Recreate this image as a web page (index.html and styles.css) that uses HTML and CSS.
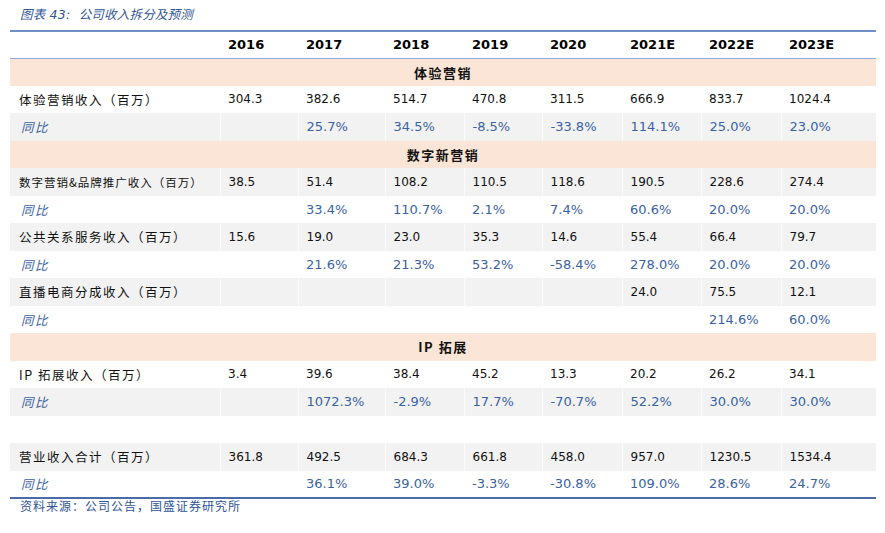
FILE: index.html
```html
<!DOCTYPE html>
<html lang="zh">
<head>
<meta charset="utf-8">
<title>公司收入拆分及预测</title>
<link rel="stylesheet" href="styles.css">
</head>
<body>
<div class="page">
  <div class="title">图表 43:&nbsp; 公司收入拆分及预测</div>
  <table class="tbl">
    <colgroup>
      <col class="c-label"><col class="c78"><col class="c87"><col class="c79"><col class="c78"><col class="c80"><col class="c79"><col class="c80"><col class="c95">
    </colgroup>
    <thead>
      <tr class="head">
        <th></th><th>2016</th><th>2017</th><th>2018</th><th>2019</th><th>2020</th><th>2021E</th><th>2022E</th><th>2023E</th>
      </tr>
    </thead>
    <tbody>
      <tr class="sec"><td colspan="9">体验营销</td></tr>
      <tr class="val"><td class="lbl">体验营销收入（百万）</td><td>304.3</td><td>382.6</td><td>514.7</td><td>470.8</td><td>311.5</td><td>666.9</td><td>833.7</td><td>1024.4</td></tr>
      <tr class="yoy gray"><td class="lbl">同比</td><td></td><td>25.7%</td><td>34.5%</td><td>-8.5%</td><td>-33.8%</td><td>114.1%</td><td>25.0%</td><td>23.0%</td></tr>
      <tr class="sec"><td colspan="9">数字新营销</td></tr>
      <tr class="val gray"><td class="lbl small">数字营销&amp;品牌推广收入（百万）</td><td>38.5</td><td>51.4</td><td>108.2</td><td>110.5</td><td>118.6</td><td>190.5</td><td>228.6</td><td>274.4</td></tr>
      <tr class="yoy"><td class="lbl">同比</td><td></td><td>33.4%</td><td>110.7%</td><td>2.1%</td><td>7.4%</td><td>60.6%</td><td>20.0%</td><td>20.0%</td></tr>
      <tr class="val gray"><td class="lbl">公共关系服务收入（百万）</td><td>15.6</td><td>19.0</td><td>23.0</td><td>35.3</td><td>14.6</td><td>55.4</td><td>66.4</td><td>79.7</td></tr>
      <tr class="yoy"><td class="lbl">同比</td><td></td><td>21.6%</td><td>21.3%</td><td>53.2%</td><td>-58.4%</td><td>278.0%</td><td>20.0%</td><td>20.0%</td></tr>
      <tr class="val gray"><td class="lbl">直播电商分成收入（百万）</td><td></td><td></td><td></td><td></td><td></td><td>24.0</td><td>75.5</td><td>12.1</td></tr>
      <tr class="yoy"><td class="lbl">同比</td><td></td><td></td><td></td><td></td><td></td><td></td><td>214.6%</td><td>60.0%</td></tr>
      <tr class="sec"><td colspan="9">IP 拓展</td></tr>
      <tr class="val"><td class="lbl">IP 拓展收入（百万）</td><td>3.4</td><td>39.6</td><td>38.4</td><td>45.2</td><td>13.3</td><td>20.2</td><td>26.2</td><td>34.1</td></tr>
      <tr class="yoy gray"><td class="lbl">同比</td><td></td><td>1072.3%</td><td>-2.9%</td><td>17.7%</td><td>-70.7%</td><td>52.2%</td><td>30.0%</td><td>30.0%</td></tr>
      <tr class="val"><td class="lbl"></td><td></td><td></td><td></td><td></td><td></td><td></td><td></td><td></td></tr>
      <tr class="val gray"><td class="lbl">营业收入合计（百万）</td><td>361.8</td><td>492.5</td><td>684.3</td><td>661.8</td><td>458.0</td><td>957.0</td><td>1230.5</td><td>1534.4</td></tr>
      <tr class="yoy last"><td class="lbl">同比</td><td></td><td>36.1%</td><td>39.0%</td><td>-3.3%</td><td>-30.8%</td><td>109.0%</td><td>28.6%</td><td>24.7%</td></tr>
    </tbody>
  </table>
  <div class="source">资料来源：公司公告，国盛证券研究所</div>
</div>
</body>
</html>
```

FILE: styles.css
```css
html, body {
  margin: 0;
  padding: 0;
  background: #ffffff;
}

.page {
  padding: 0 9px 0 10px;
  font-family: "DejaVu Sans", "Noto Sans CJK SC", sans-serif;
}

.title {
  height: 30px;
  padding-left: 10px;
  line-height: 30px;
  box-sizing: border-box;
  font-family: "DejaVu Sans", "Noto Sans CJK SC", sans-serif;
  font-size: 12.5px;
  font-style: italic;
  color: #2f5597;
  letter-spacing: 0.2px;
}

.tbl {
  width: 866px;
  border-collapse: collapse;
  table-layout: fixed;
  border-top: 2px solid #6f8fc8;
}

.c-label { width: 210px; }
.c78 { width: 78px; }
.c87 { width: 87px; }
.c79 { width: 79px; }
.c80 { width: 80px; }
.c95 { width: 95px; }

.tbl th,
.tbl td {
  height: 27.5px;
  padding: 0 0 0 8px;
  box-sizing: border-box;
  text-align: left;
  white-space: nowrap;
  font-size: 12px;
  color: #111111;
}

.head th {
  font-weight: bold;
  font-size: 13px;
  border-bottom: 1.5px solid #8eaadb;
  color: #000000;
  height: 27px;
}

.sec td {
  background: #fbe5d6;
  text-align: center;
  padding: 0;
  font-family: "Noto Sans CJK SC", sans-serif;
  font-weight: bold;
  font-size: 13px;
  letter-spacing: 1.5px;
  color: #111111;
}

.tbl td.lbl {
  padding-left: 9px;
  font-family: "Noto Sans CJK SC", sans-serif;
  font-size: 12.5px;
  letter-spacing: 1.5px;
}

.tbl td.lbl.small {
  font-size: 11.5px;
  letter-spacing: 1px;
}

.gray td {
  background: #f2f2f2;
  border-left: 1px solid #fbfbfb;
}

.gray td:first-child {
  border-left: none;
}

.yoy td {
  color: #3a62a3;
  font-size: 13px;
}

.yoy td.lbl {
  font-style: italic;
  color: #3a62a3;
  padding-left: 11px;
}

.last td {
  border-bottom: 2px solid #4a6aa8;
}

.source {
  padding-left: 10px;
  margin-top: -2px;
  font-family: "Noto Sans CJK SC", sans-serif;
  font-size: 12px;
  letter-spacing: 1px;
  color: #2f5597;
}
```
